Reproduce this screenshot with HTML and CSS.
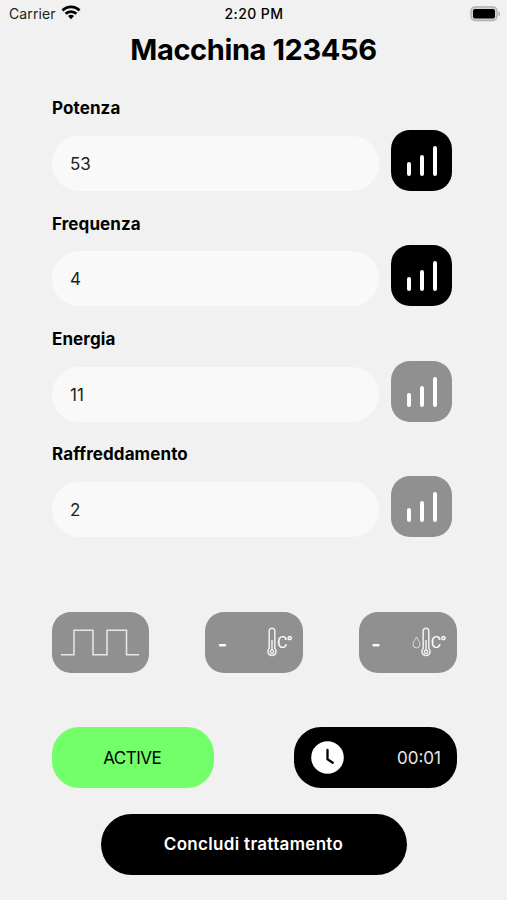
FILE: index.html
```
<!DOCTYPE html>
<html lang="it">

<head>
  <meta charset="UTF-8">
  <meta name="viewport" content="width=device-width, initial-scale=1.0">
  <title>Macchina 123456</title>
  <link rel="stylesheet" href="styles.css">
</head>

<body>
  <!-- shared icons -->
  <svg class="defs" width="0" height="0">
    <symbol id="bars" viewBox="0 0 61 61">
      <path d="M18 34v10M31 27v17M44 18v26" fill="none" stroke="#fff" stroke-width="4" stroke-linecap="round" />
    </symbol>
    <symbol id="thermo" viewBox="0 0 10 31">
      <g fill="none" stroke="#f0f0f0">
        <path d="M2.2 21.5V4a2.8 2.8 0 0 1 5.6 0v17.5a4.1 4.1 0 1 1-5.6 0z" stroke-width="1.5" />
        <path d="M5 13v10" stroke-width="1.5" />
        <circle cx="5" cy="24.8" r="1.7" stroke-width="1.4" />
      </g>
    </symbol>
  </svg>

  <div class="status-bar">
    <div class="carrier">
      <span>Carrier</span>
      <svg class="wifi" width="20" height="15" viewBox="0 0 20 15">
        <g fill="none" stroke="#000" stroke-width="2.8">
          <path d="M1.5 5.4a12 12 0 0 1 17 0" />
          <path d="M4.6 8.8a7.6 7.6 0 0 1 10.8 0" />
        </g>
        <path d="M10 14.2l-3-3.1a4.3 4.3 0 0 1 6 0z" />
      </svg>
    </div>
    <span class="clock">2:20 PM</span>
    <svg class="battery" width="32" height="16" viewBox="0 0 32 16">
      <rect x="2" y="1" width="26" height="13.5" rx="4" fill="#d4d4d4" stroke="#b0b0b0" stroke-width="1.4" />
      <rect x="4" y="3" width="22" height="9.5" rx="2" />
      <path d="M29.5 5.3c2.2.8 2.2 4.1 0 4.9z" fill="#aaa" />
    </svg>
  </div>

  <h1 class="title">Macchina 123456</h1>

  <div class="fields">
    <div class="field">
      <div class="label">Potenza</div>
      <div class="row">
        <div class="value">53</div>
        <div class="level"><svg><use href="#bars" /></svg></div>
      </div>
    </div>
    <div class="field">
      <div class="label">Frequenza</div>
      <div class="row">
        <div class="value">4</div>
        <div class="level"><svg><use href="#bars" /></svg></div>
      </div>
    </div>
    <div class="field">
      <div class="label">Energia</div>
      <div class="row">
        <div class="value">11</div>
        <div class="level off"><svg><use href="#bars" /></svg></div>
      </div>
    </div>
    <div class="field">
      <div class="label">Raffreddamento</div>
      <div class="row">
        <div class="value">2</div>
        <div class="level off"><svg><use href="#bars" /></svg></div>
      </div>
    </div>
  </div>

  <div class="tiles">
    <div class="tile wave">
      <svg width="78" height="28" viewBox="0 0 78 28">
        <path d="M0 25.8h13V1.2h19v24.6h14V1.2h19.5v24.6H78" fill="none" stroke="#e8e8e8" stroke-width="1.5" />
      </svg>
    </div>
    <div class="tile">
      <span class="dash">-</span>
      <div class="sensor">
        <svg class="thermo"><use href="#thermo" /></svg>
        <span class="unit">C<b>°</b></span>
      </div>
    </div>
    <div class="tile">
      <span class="dash">-</span>
      <div class="sensor">
        <svg width="9" height="13" viewBox="0 0 9 13">
          <path d="M4.5 1C3.5 3.4 1 5.9 1 8.4a3.5 3.5 0 0 0 7 0C8 5.9 5.5 3.4 4.5 1z" fill="none" stroke="#ddd" />
        </svg>
        <svg class="thermo"><use href="#thermo" /></svg>
        <span class="unit">C<b>°</b></span>
      </div>
    </div>
  </div>

  <div class="state">
    <div class="pill active">ACTIVE</div>
    <div class="pill timer">
      <svg width="33" height="33" viewBox="0 0 33 33">
        <circle cx="16.5" cy="16.5" r="16.3" fill="#fff" />
        <path d="M16.5 9v9.3l5.3 3.4" fill="none" stroke="#000" stroke-width="2.3" stroke-linecap="round" stroke-linejoin="round" />
      </svg>
      <span>00:01</span>
    </div>
  </div>

  <div class="end">Concludi trattamento</div>
</body>

</html>
```

FILE: styles.css
```
* {
  box-sizing: border-box;
  margin: 0;
  padding: 0;
}

body {
  width: 507px;
  height: 900px;
  overflow: hidden;
  background-color: #f1f1f1;
  color: #000;
  font-family: Inter, "Liberation Sans", sans-serif;
}

svg {
  display: block;
}

.defs {
  position: absolute;
}

/* status bar */
.status-bar {
  display: grid;
  grid-template-columns: 1fr auto 1fr;
  align-items: center;
  height: 27px;
  padding: 0 6px 0 9px;
  font-size: 14px;
}

.carrier {
  display: flex;
  align-items: center;
  gap: 5px;
  color: #222;
  letter-spacing: 0.1px;
}

.wifi {
  margin-top: -2px;
}

.clock {
  margin-right: 2px;
  font-weight: 500;
  letter-spacing: 0.4px;
}

.battery {
  justify-self: end;
}

.title {
  height: 44px;
  line-height: 46px;
  font-size: 29px;
  font-weight: 700;
  letter-spacing: -0.39px;
  text-align: center;
}

/* fields */
.fields {
  padding: 26.3px 55px 0 52px;
}

.field {
  height: 115.3px;
}

.label {
  height: 20px;
  margin-bottom: 12.7px;
  line-height: 22px;
  font-size: 17px;
  font-weight: 700;
  letter-spacing: 0.1px;
}

.row {
  display: flex;
  align-items: flex-end;
  gap: 12px;
}

.value {
  width: 327px;
  height: 55px;
  padding-left: 18px;
  border-radius: 27px;
  background-color: #f9f9f9;
  color: #222;
  font-size: 17px;
  line-height: 56px;
}

.level {
  width: 61px;
  height: 61px;
  border-radius: 19px;
  background-color: #000;
}

.level svg {
  width: 61px;
  height: 61px;
}

.level.off {
  background-color: #909090;
}

/* sensor tiles */
.tiles {
  display: flex;
  justify-content: space-between;
  padding: 54px 50.5px 0 51.5px;
}

.tile {
  display: flex;
  justify-content: space-between;
  align-items: center;
  width: 97.7px;
  height: 61px;
  padding: 0 11px 0 12.5px;
  border-radius: 19px;
  background-color: #909090;
  color: #fff;
}

.tile.wave {
  justify-content: center;
  padding: 0;
}

.dash {
  padding-top: 2px;
  font-size: 20px;
  font-weight: 700;
}

.sensor {
  display: flex;
  align-items: center;
}

.thermo {
  width: 10px;
  height: 31px;
}

.unit {
  font-family: Roboto, sans-serif;
  font-size: 16px;
  letter-spacing: -1px;
}

.unit b {
  font-weight: 900;
}

/* state pills */
.state {
  display: flex;
  justify-content: space-between;
  padding: 54px 50.5px 0 51.5px;
}

.pill {
  display: flex;
  align-items: center;
  width: 162.5px;
  height: 61px;
  border-radius: 27px;
  font-size: 17px;
}

.active {
  justify-content: center;
  padding-right: 1px;
  background-color: #72ff69;
  letter-spacing: -0.5px;
}

.timer {
  justify-content: space-between;
  padding: 0 15.5px 0 17px;
  background-color: #000;
  color: #e8e8e8;
}

.end {
  width: 306px;
  height: 61px;
  margin: 25.3px auto 0;
  border-radius: 31px;
  background-color: #000;
  color: #fff;
  font-size: 17px;
  font-weight: 600;
  letter-spacing: 0.32px;
  line-height: 61px;
  text-align: center;
}
```
